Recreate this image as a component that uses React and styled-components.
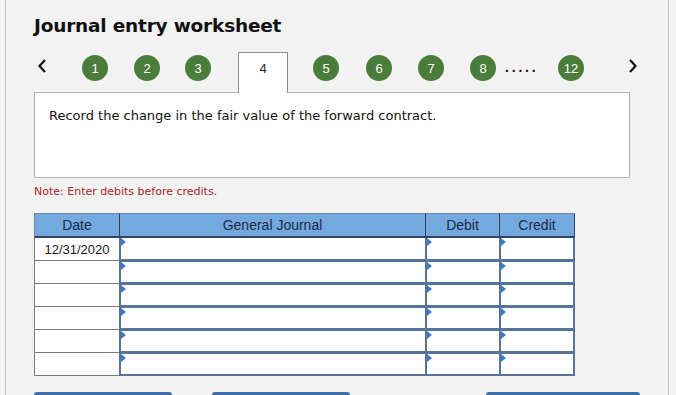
import React from "react"
import styled, { createGlobalStyle } from "styled-components"

const GlobalStyle = createGlobalStyle`
  html, body {
    margin: 0;
    padding: 0;
    background: #f2f2f2;
    overflow: hidden;
  }
`

const Page = styled.div`
  width: 676px;
  height: 395px;
  overflow: hidden;
  padding-left: 5px;
  box-sizing: border-box;
`

const Panel = styled.div`
  width: 664px;
  height: 420px;
  box-sizing: border-box;
  border-left: 1px solid #c4c4c4;
  border-right: 1px solid #c4c4c4;
  background: #f2f2f2;
  padding: 14px 0 0 28px;
`

const Title = styled.h1`
  margin: 0;
  font-family: "DejaVu Sans", Verdana, sans-serif;
  font-weight: bold;
  font-size: 18.5px;
  line-height: 24px;
  color: #111;
  letter-spacing: -0.2px;
`

const Nav = styled.div`
  display: flex;
  align-items: flex-start;
  height: 40px;
  margin-top: 14px;
`

const Arrow = styled.span`
  margin-left: ${({ $left }) => $left}px;
  margin-top: 6px;
  width: 12px;
  display: flex;
  justify-content: center;
  flex-shrink: 0;
`

const Circle = styled.span`
  margin-left: ${({ $left }) => $left}px;
  margin-top: 3px;
  width: 26px;
  height: 26px;
  border-radius: 50%;
  background: #4a7d3b;
  color: #fff;
  font-family: "Liberation Sans", Arial, sans-serif;
  font-size: 13px;
  display: flex;
  align-items: center;
  justify-content: center;
  flex-shrink: 0;
`

const Tab = styled.span`
  margin-left: ${({ $left }) => $left}px;
  width: 50px;
  height: 41px;
  box-sizing: border-box;
  border: 1px solid #8c8c8c;
  border-bottom: none;
  background: #fff;
  position: relative;
  z-index: 1;
  font-family: "Liberation Sans", Arial, sans-serif;
  font-size: 13px;
  color: #1a1a2e;
  display: flex;
  justify-content: center;
  padding-top: 8px;
  flex-shrink: 0;
`

const Dots = styled.span`
  margin-left: 9px;
  margin-top: 7px;
  width: 40px;
  flex-shrink: 0;
  font-family: "Liberation Sans", Arial, sans-serif;
  font-weight: bold;
  font-size: 14px;
  letter-spacing: 2.8px;
  color: #111;
`

const ContentBox = styled.div`
  width: 596px;
  height: 86px;
  box-sizing: border-box;
  border: 1px solid #b4b4b4;
  background: #fff;
  padding: 15px 0 0 14px;
  font-family: "DejaVu Sans", Verdana, sans-serif;
  font-size: 13px;
  color: #111;
`

const Note = styled.div`
  margin-top: 7px;
  font-family: "DejaVu Sans", Verdana, sans-serif;
  font-size: 11px;
  color: #a8262b;
  height: 14px;
`

const Table = styled.div`
  margin-top: 14px;
  display: grid;
  grid-template-columns: 85px 306px 74px 76px;
  grid-template-rows: 25px repeat(6, 23px);
  width: 541px;
  font-family: "Liberation Sans", Arial, sans-serif;
  font-size: 13px;
`

const HeadCell = styled.div`
  box-sizing: border-box;
  background: #74a9df;
  color: #1b2a47;
  font-size: 14px;
  border-top: 1px solid #6f87a3;
  border-left: 1px solid ${({ $first }) => ($first ? "#6f87a3" : "#2d4460")};
  border-right: ${({ $last }) => ($last ? "1px solid #2d4460" : "none")};
  border-bottom: 2px solid #2d4460;
  display: flex;
  align-items: center;
  justify-content: center;
`

const DateCell = styled.div`
  box-sizing: border-box;
  background: #fff;
  border-left: 1px solid #7b7b7b;
  border-bottom: 1px solid #7b7b7b;
  color: #1a1a1a;
  display: flex;
  align-items: center;
  justify-content: center;
`

const InputCell = styled.div`
  position: relative;
  box-sizing: border-box;
  background: #fff;
  border: 2px solid #56739a;
  border-top-width: ${({ $top }) => ($top ? 0 : 1)}px;
  border-bottom-width: 2px;
  border-left-width: 2px;
  border-right-width: ${({ $last }) => ($last ? 2 : 0)}px;

  &::before {
    content: "";
    position: absolute;
    top: 0;
    left: 0;
    border-top: 4px solid transparent;
    border-bottom: 4px solid transparent;
    border-left: 5px solid #3f78c6;
  }
`

const Buttons = styled.div`
  display: flex;
  margin-top: 16px;
`

const ButtonBar = styled.div`
  margin-left: ${({ $left }) => $left}px;
  width: ${({ $width }) => $width}px;
  height: 30px;
  background: #3d6ea6;
  border-radius: 3px 3px 0 0;
`

const ChevronLeft = () => (
  <svg width="10" height="16" viewBox="0 0 10 16">
    <path d="M8 2 L2.5 8 L8 14" fill="none" stroke="#111" strokeWidth="2.2" />
  </svg>
)

const ChevronRight = () => (
  <svg width="10" height="16" viewBox="0 0 10 16">
    <path d="M2 2 L7.5 8 L2 14" fill="none" stroke="#111" strokeWidth="2.2" />
  </svg>
)

const rows = ["12/31/2020", "", "", "", "", ""]

const App = () => {
  return (
    <Page>
      <GlobalStyle />
      <Panel>
        <Title>Journal entry worksheet</Title>
        <Nav>
          <Arrow $left={2}>
            <ChevronLeft />
          </Arrow>
          <Circle $left={34}>1</Circle>
          <Circle $left={26}>2</Circle>
          <Circle $left={25}>3</Circle>
          <Tab $left={27}>4</Tab>
          <Circle $left={25}>5</Circle>
          <Circle $left={27}>6</Circle>
          <Circle $left={26}>7</Circle>
          <Circle $left={26}>8</Circle>
          <Dots>.....</Dots>
          <Circle $left={13}>12</Circle>
          <Arrow $left={43}>
            <ChevronRight />
          </Arrow>
        </Nav>
        <ContentBox>
          Record the change in the fair value of the forward contract.
        </ContentBox>
        <Note>Note: Enter debits before credits.</Note>
        <Table>
          <HeadCell $first>Date</HeadCell>
          <HeadCell>General Journal</HeadCell>
          <HeadCell>Debit</HeadCell>
          <HeadCell $last>Credit</HeadCell>
          {rows.map((date, i) => (
            <React.Fragment key={i}>
              <DateCell>{date}</DateCell>
              <InputCell $top={i === 0} />
              <InputCell $top={i === 0} />
              <InputCell $top={i === 0} $last />
            </React.Fragment>
          ))}
        </Table>
        <Buttons>
          <ButtonBar $left={0} $width={138} />
          <ButtonBar $left={40} $width={138} />
          <ButtonBar $left={136} $width={154} />
        </Buttons>
      </Panel>
    </Page>
  )
}

export default App
